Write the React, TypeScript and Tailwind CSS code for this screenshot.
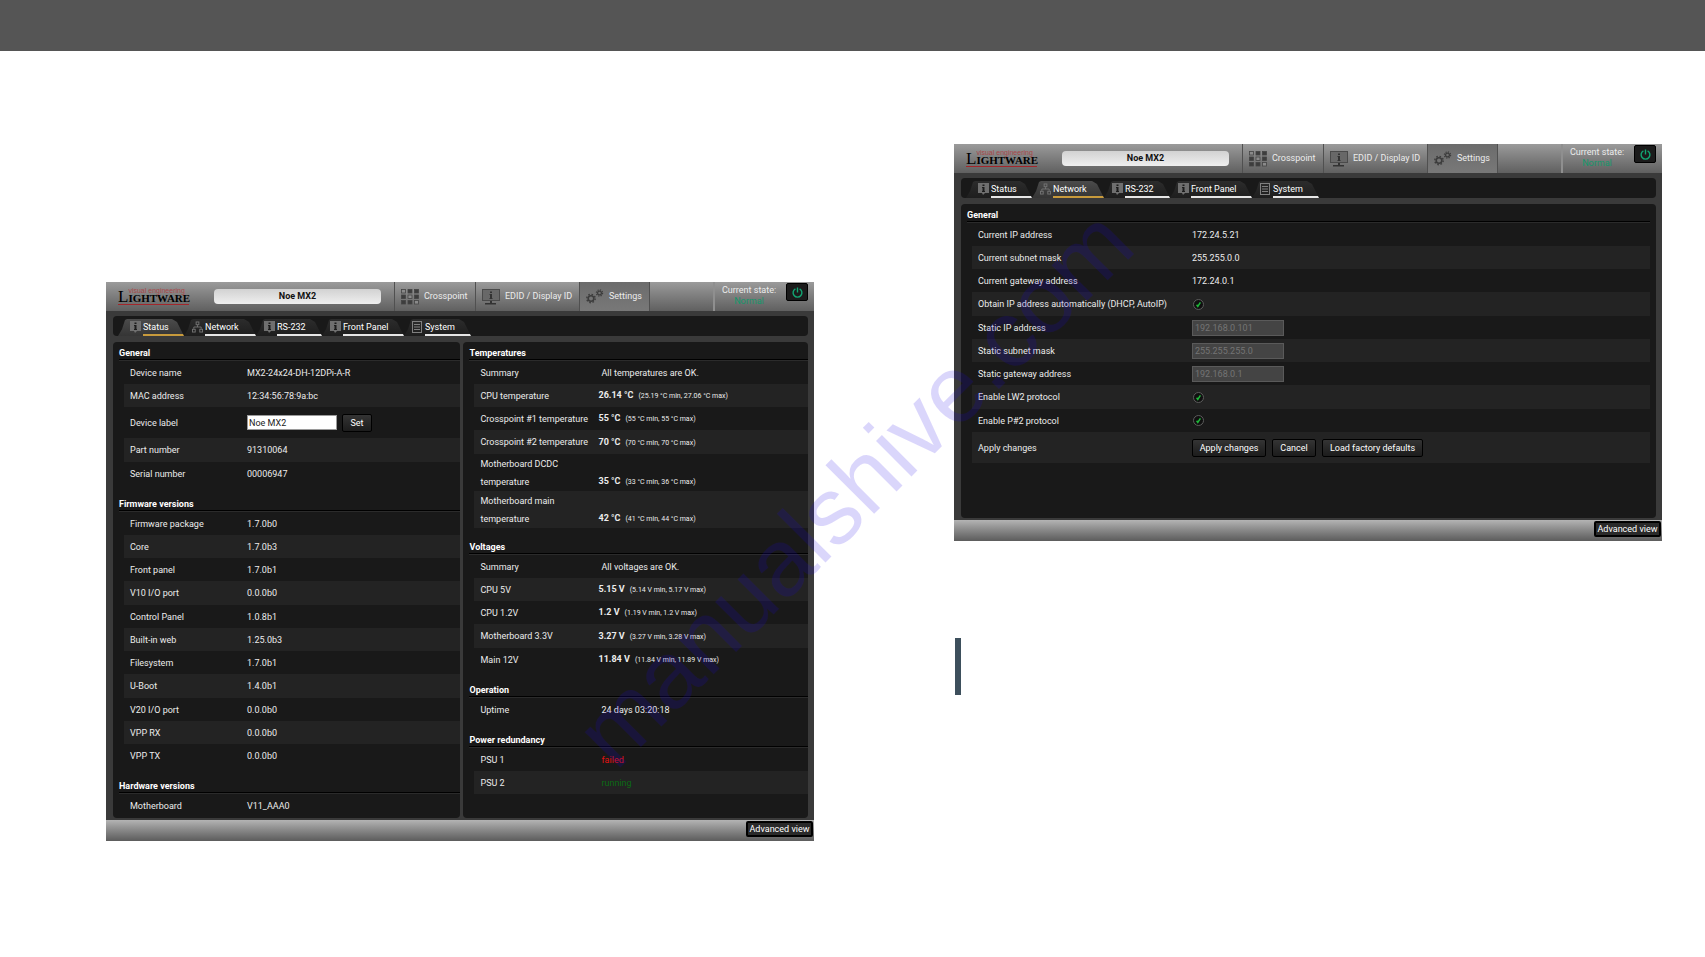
import type { ReactNode } from "react";
import clsx from "clsx";

type Row = { label: string; value: ReactNode; height?: string };

const TABS = [
  { name: "Status", icon: "info", width: "w-[66px]", pad: "pl-3" },
  { name: "Network", icon: "network", width: "w-[72px]", pad: "pl-2" },
  { name: "RS-232", icon: "info", width: "w-[66px]", pad: "pl-2" },
  { name: "Front Panel", icon: "info", width: "w-[82px]", pad: "pl-2" },
  { name: "System", icon: "list", width: "w-[67px]", pad: "pl-2" },
];

/* Icons */
function TabIcon({ name }: { name: string }) {
  if (name === "network") {
    return (
      <svg width="11" height="12" viewBox="0 0 12 12" fill="none" stroke="#757575">
        <rect x="4.5" y="0.5" width="3" height="3" />
        <rect x="0.5" y="8.5" width="3" height="3" />
        <rect x="8.5" y="8.5" width="3" height="3" />
        <path d="M6 4v2M2 8V6h8v2" />
      </svg>
    );
  }
  if (name === "list") {
    return (
      <svg width="11" height="12" viewBox="0 0 11 12" fill="none" stroke="#808080">
        <rect x="0.5" y="0.5" width="9" height="11" />
        <path d="M2 3.5h6M2 6h6M2 8.5h6" />
      </svg>
    );
  }
  return (
    <svg width="11" height="12" viewBox="0 0 11 12">
      <path d="M0 0h11v10H7l-2 2-1-2H0z" fill="#6f6f6f" />
      <path d="M4.5 1.5h2v1.5h-2zM4 4h2.5v4H7v1H4V8h.5V5H4z" fill="#1c1c1c" />
    </svg>
  );
}

function CrosspointIcon() {
  const open = [0, 4, 8];
  return (
    <svg width="18" height="16" viewBox="0 0 18 16">
      {[0, 1, 2, 3, 4, 5, 6, 7, 8].map((i) => (
        <rect
          key={i}
          x={(i % 3) * 6.5 + 0.5}
          y={Math.floor(i / 3) * 5.5 + 0.5}
          width="4"
          height="3.5"
          fill={open.includes(i) ? "#8a8a8a" : "#3d3d3d"}
          stroke="#444"
          strokeWidth="0.8"
        />
      ))}
    </svg>
  );
}

function DisplayIcon() {
  return (
    <svg width="18" height="16" viewBox="0 0 18 16">
      <rect x="0.5" y="0.5" width="17" height="11" fill="#686868" stroke="#4a4a4a" />
      <path d="M8 2.5h2V4H8zM7.5 5H10v4h.5v1h-3V9H8V6h-.5z" fill="#333" />
      <path d="M8 12h2v2h4v1.5H3V14h5z" fill="#333" />
    </svg>
  );
}

function GearsIcon() {
  return (
    <svg width="18" height="15" viewBox="0 0 18 15" fill="none" stroke="#3c3c3c">
      <circle cx="5" cy="9.5" r="2.8" strokeWidth="1.6" />
      <circle cx="5" cy="9.5" r="4.2" strokeWidth="1.4" strokeDasharray="1.6 1.7" />
      <circle cx="13.5" cy="4" r="1.9" strokeWidth="1.2" />
      <circle cx="13.5" cy="4" r="3.1" strokeWidth="1.2" strokeDasharray="1.2 1.24" />
    </svg>
  );
}

function Logo() {
  return (
    <div className="w-[71px] shrink-0 border-b border-[#a3262b] font-['Liberation_Serif',serif] text-black">
      <div className="flex h-4 items-end">
        <span className="text-[17px] leading-[15px]">L</span>
        <div className="flex flex-col">
          <span className="h-[5px] font-['Liberation_Sans',sans-serif] text-[7px] leading-[5px] whitespace-nowrap text-[#a8474a]">
            visual engineering
          </span>
          <span className="text-[11px] leading-[11px] font-bold">IGHTWARE</span>
        </div>
      </div>
    </div>
  );
}

/* Controls */
function DarkButton({ children, className }: { children: ReactNode; className?: string }) {
  return (
    <button
      className={clsx(
        "h-[18px] rounded-xs border border-black bg-linear-to-b from-[#343434] to-[#1c1c1c] text-center leading-4 whitespace-nowrap text-white",
        className,
      )}
    >
      {children}
    </button>
  );
}

function Tick({ label }: { label: string }) {
  return (
    <span className="grid size-3 place-items-center">
      <input
        type="checkbox"
        aria-label={label}
        defaultChecked
        className="col-start-1 row-start-1 size-[11px] appearance-none rounded-full border border-[#5c5c5c] bg-[#101010]"
      />
      <svg width="7" height="7" viewBox="0 0 7 7" className="pointer-events-none col-start-1 row-start-1">
        <path d="M1.6 3.8l1.2 1.6L5.4 1.4" fill="none" stroke="#1fb83a" strokeWidth="1.5" />
      </svg>
    </span>
  );
}

function StaticInput({ label, value }: { label: string; value: string }) {
  return (
    <input
      aria-label={label}
      defaultValue={value}
      disabled
      className="block h-4 w-[92px] border border-[#5a5a5a] bg-[#444] px-0.5 text-[9px] text-[#747474]"
    />
  );
}

function Reading({ value, range }: { value: string; range: string }) {
  return (
    <>
      <b className="font-bold">{value}</b>
      <span className="ml-[5px] text-[7px]">({range})</span>
    </>
  );
}

function Note({ children, className }: { children: ReactNode; className?: string }) {
  return <span className={clsx("pl-[3px]", className)}>{children}</span>;
}

function Section({
  title,
  rows,
  labelWidth,
  first,
}: {
  title: string;
  rows: Row[];
  labelWidth: string;
  first?: boolean;
}) {
  return (
    <section className={first ? "" : "mt-2"}>
      <h2 className="ml-1.5 h-[18px] border-b border-black pt-[5px] leading-3 font-bold text-white">{title}</h2>
      <div className="ml-1.5 h-px bg-[#2b2b2b]" />
      <div className="ml-[11px]">
        <table className="w-full table-fixed border-collapse">
          <tbody>
            {rows.map((row) => (
              <tr key={row.label} className={clsx("even:bg-[#232323]", row.height ?? "h-[23px] nth-[4n]:h-6")}>
                <th scope="row" className={clsx("p-0 pl-1.5 text-left leading-[18px] font-normal", labelWidth)}>
                  {row.label}
                </th>
                <td className={clsx("p-0 leading-[18px] whitespace-nowrap", row.height === "h-[37px]" && "align-bottom")}>
                  {row.value}
                </td>
              </tr>
            ))}
          </tbody>
        </table>
      </div>
    </section>
  );
}

function Device({ activeTab, children }: { activeTab: string; children: ReactNode }) {
  return (
    <div className="bg-[#3a3a3a] text-[9px] text-[#ececec]">
      {/* Header */}
      <header className="flex h-[29px] items-center bg-linear-to-b from-[#9b9b9b] to-[#606060] pl-3">
        <Logo />
        <div className="ml-[25px] h-[15px] w-[167px] rounded-sm bg-linear-to-b from-[#d2d2d2] to-[#efefef] text-center leading-[14px] font-bold text-[#111]">
          Noe MX2
        </div>
        <nav className="ml-[13px] flex h-full">
          <button className="flex w-[81px] items-center gap-[5px] border-l border-[#505050] pl-1.5">
            <CrosspointIcon />
            Crosspoint
          </button>
          <button className="flex w-[104px] items-center gap-[5px] border-l border-[#505050] pl-1.5">
            <DisplayIcon />
            EDID / Display ID
          </button>
          <button className="flex w-[71px] items-center gap-[5px] border-x border-[#505050] bg-linear-to-b from-[#6c6c6c] to-[#787878] pl-1.5">
            <GearsIcon />
            Settings
          </button>
        </nav>
        <div className="ml-auto flex h-full items-start border-l-2 border-[#8f8f8f] pl-[7px]">
          <div className="w-[54px] pt-[3px] text-center leading-[11px] whitespace-nowrap">
            <div>Current state:</div>
            <div className="text-[#14966a]">Normal</div>
          </div>
          <button
            aria-label="Power"
            className="mt-px mr-1.5 ml-2.5 grid h-[18px] w-[22px] place-items-center rounded-xs border border-black bg-[#1b1b1b]"
          >
            <svg width="11" height="11" viewBox="0 0 11 11" fill="none" stroke="#12a673" strokeWidth="1.4">
              <path d="M3.4 1.9a4.4 4.4 0 1 0 4.2 0M5.5 0.4v5.2" />
            </svg>
          </button>
        </div>
      </header>

      {/* Tabs */}
      <div className="pt-[5px] pr-1.5 pb-1.5 pl-[7px]">
        <div className="flex h-5 rounded-sm bg-[#191919] pt-[3px] pl-[5px]">
          {TABS.map((tab) => {
            const active = tab.name === activeTab;
            return (
              <button
                key={tab.name}
                className={clsx(
                  "flex items-start gap-0.5 bg-linear-to-b [clip-path:polygon(0_100%,4px_60%,7px_1px,9px_0,calc(100%-12px)_0,calc(100%-7px)_3px,100%_100%)]",
                  active ? "from-[#4b4b4b] to-[#353535]" : "from-[#2c2c2c] to-[#1e1e1e]",
                  tab.width,
                  tab.pad,
                )}
              >
                <span className="flex h-4 items-center">
                  <TabIcon name={tab.icon} />
                </span>
                <span
                  className={clsx(
                    "h-[17px] flex-1 border-b-2 text-left leading-[17px] whitespace-nowrap text-white",
                    active ? "border-[#c79a3c]" : "border-[#e6e6e6]",
                  )}
                >
                  {tab.name}
                </span>
              </button>
            );
          })}
        </div>
      </div>

      <div className="pr-1.5 pb-0.5 pl-[7px]">{children}</div>

      {/* Footer */}
      <footer className="flex h-[21px] justify-end bg-linear-to-b from-[#b4b4b4] to-[#5c5c5c] pt-px pr-px">
        <button className="h-4 w-[67px] rounded-xs border-2 border-black bg-[#2a2a2a] text-center leading-3 whitespace-nowrap text-white">
          Advanced view
        </button>
      </footer>
    </div>
  );
}

const general: Row[] = [
  { label: "Device name", value: "MX2-24x24-DH-12DPi-A-R" },
  { label: "MAC address", value: "12:34:56:78:9a:bc" },
  {
    label: "Device label",
    height: "h-[31px]",
    value: (
      <div className="flex items-center gap-[5px]">
        <input
          aria-label="Device label"
          defaultValue="Noe MX2"
          className="h-[15px] w-[90px] border border-[#9a9a9a] bg-white px-px text-[9px] text-[#222]"
        />
        <DarkButton className="w-[30px]">Set</DarkButton>
      </div>
    ),
  },
  { label: "Part number", value: "91310064" },
  { label: "Serial number", value: "00006947" },
];

const firmware: Row[] = [
  { label: "Firmware package", value: "1.7.0b0" },
  { label: "Core", value: "1.7.0b3" },
  { label: "Front panel", value: "1.7.0b1" },
  { label: "V10 I/O port", value: "0.0.0b0" },
  { label: "Control Panel", value: "1.0.8b1" },
  { label: "Built-in web", value: "1.25.0b3" },
  { label: "Filesystem", value: "1.7.0b1" },
  { label: "U-Boot", value: "1.4.0b1" },
  { label: "V20 I/O port", value: "0.0.0b0" },
  { label: "VPP RX", value: "0.0.0b0" },
  { label: "VPP TX", value: "0.0.0b0" },
];

const hardware: Row[] = [{ label: "Motherboard", value: "V11_AAA0" }];

const temperatures: Row[] = [
  { label: "Summary", value: <Note>All temperatures are OK.</Note> },
  { label: "CPU temperature", value: <Reading value="26.14 °C" range="25.19 °C min, 27.06 °C max" /> },
  { label: "Crosspoint #1 temperature", value: <Reading value="55 °C" range="55 °C min, 55 °C max" /> },
  { label: "Crosspoint #2 temperature", value: <Reading value="70 °C" range="70 °C min, 70 °C max" /> },
  {
    label: "Motherboard DCDC temperature",
    height: "h-[37px]",
    value: <Reading value="35 °C" range="33 °C min, 36 °C max" />,
  },
  {
    label: "Motherboard main temperature",
    height: "h-[37px]",
    value: <Reading value="42 °C" range="41 °C min, 44 °C max" />,
  },
];

const voltages: Row[] = [
  { label: "Summary", value: <Note>All voltages are OK.</Note> },
  { label: "CPU 5V", value: <Reading value="5.15 V" range="5.14 V min, 5.17 V max" /> },
  { label: "CPU 1.2V", value: <Reading value="1.2 V" range="1.19 V min, 1.2 V max" /> },
  { label: "Motherboard 3.3V", value: <Reading value="3.27 V" range="3.27 V min, 3.28 V max" /> },
  { label: "Main 12V", value: <Reading value="11.84 V" range="11.84 V min, 11.89 V max" /> },
];

const operation: Row[] = [{ label: "Uptime", value: <Note>24 days 03:20:18</Note> }];

const power: Row[] = [
  { label: "PSU 1", value: <Note className="text-[#e31212]">failed</Note> },
  { label: "PSU 2", value: <Note className="text-[#0b6a14]">running</Note> },
];

const network: Row[] = [
  { label: "Current IP address", value: "172.24.5.21" },
  { label: "Current subnet mask", value: "255.255.0.0" },
  { label: "Current gateway address", value: "172.24.0.1" },
  {
    label: "Obtain IP address automatically (DHCP, AutoIP)",
    value: <Tick label="Obtain IP address automatically (DHCP, AutoIP)" />,
  },
  { label: "Static IP address", value: <StaticInput label="Static IP address" value="192.168.0.101" /> },
  { label: "Static subnet mask", value: <StaticInput label="Static subnet mask" value="255.255.255.0" /> },
  { label: "Static gateway address", value: <StaticInput label="Static gateway address" value="192.168.0.1" /> },
  { label: "Enable LW2 protocol", value: <Tick label="Enable LW2 protocol" /> },
  { label: "Enable P#2 protocol", value: <Tick label="Enable P#2 protocol" /> },
  {
    label: "Apply changes",
    height: "h-[31px]",
    value: (
      <div className="flex gap-1.5">
        <DarkButton className="w-[74px]">Apply changes</DarkButton>
        <DarkButton className="w-[44px]">Cancel</DarkButton>
        <DarkButton className="w-[101px]">Load factory defaults</DarkButton>
      </div>
    ),
  },
];

export default function App() {
  return (
    <div className="relative min-h-screen overflow-hidden bg-white font-[Roboto,sans-serif]">
      <div className="h-[51px] bg-[#555]" />

      <main className="grid grid-cols-2 items-start gap-[140px] pr-[43px] pl-[106px]">
        <div className="pt-[231px]">
          <Device activeTab="Status">
            <div className="grid grid-cols-[348fr_345fr] gap-[3px]">
              <div className="rounded-sm bg-[#191919] pb-px">
                <Section first title="General" rows={general} labelWidth="w-[123px]" />
                <Section title="Firmware versions" rows={firmware} labelWidth="w-[123px]" />
                <Section title="Hardware versions" rows={hardware} labelWidth="w-[123px]" />
              </div>
              <div className="rounded-sm bg-[#191919]">
                <Section first title="Temperatures" rows={temperatures} labelWidth="w-[124px]" />
                <Section title="Voltages" rows={voltages} labelWidth="w-[124px]" />
                <Section title="Operation" rows={operation} labelWidth="w-[124px]" />
                <Section title="Power redundancy" rows={power} labelWidth="w-[124px]" />
              </div>
            </div>
          </Device>
        </div>

        <div className="pt-[93px]">
          <Device activeTab="Network">
            <div className="rounded-sm bg-[#191919] pr-1.5 pb-[55px]">
              <Section first title="General" rows={network} labelWidth="w-[220px]" />
            </div>
          </Device>
          <div className="mt-[97px] ml-px h-[57px] w-1.5 bg-[#3d4f5c]" />
        </div>
      </main>

      {/* Watermark */}
      <div className="pointer-events-none absolute top-[488px] left-[854px] -translate-x-1/2 -translate-y-1/2 -rotate-45 font-['Liberation_Sans',Arial,sans-serif] text-[95px] leading-none whitespace-nowrap text-[#1a00e6]/16">
        manualshive.com
      </div>
    </div>
  );
}
